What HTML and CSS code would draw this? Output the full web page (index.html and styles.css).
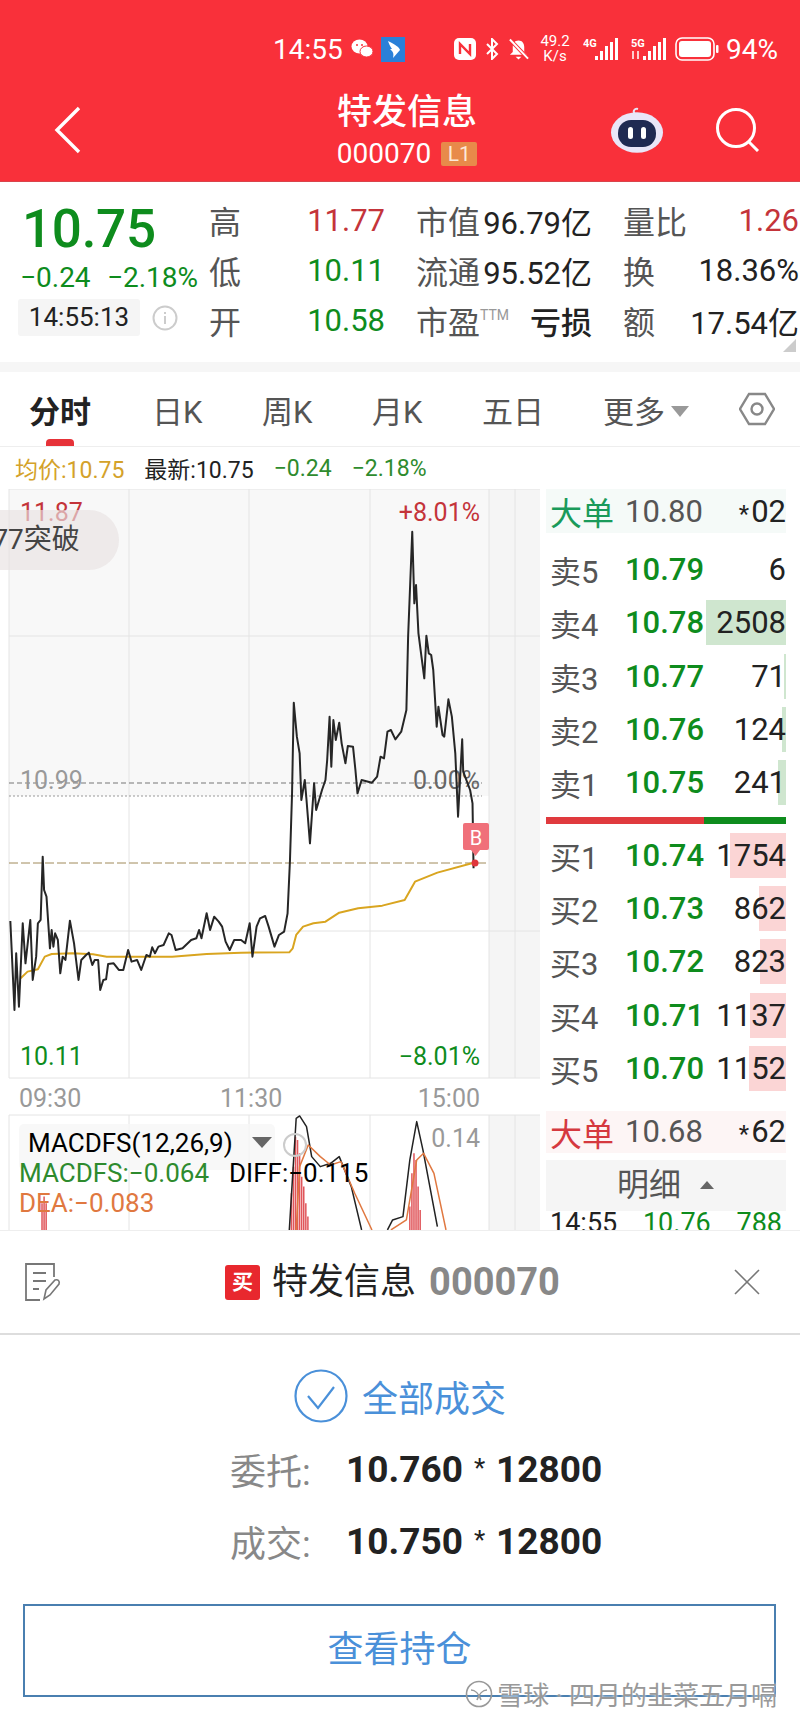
FILE: index.html
```html
<!DOCTYPE html>
<html lang="zh">
<head>
    <meta charset="UTF-8">
    <meta name="viewport" content="width=device-width, initial-scale=1.0">
    <title>特发信息</title>
    <link rel="stylesheet" href="styles.css">
</head>
<body>
<div id="app">
    <header class="top">
        <div class="status">
            <span class="clock">14:55</span>
            <svg class="ico-wx" viewBox="0 0 22 20"><ellipse cx="8.5" cy="7.5" rx="8" ry="7" fill="#fff"/><ellipse cx="15.5" cy="12.5" rx="6.5" ry="5.5" fill="#fff" stroke="#f9303a"/><circle cx="6" cy="6" r="1" fill="#f9303a"/><circle cx="11" cy="6" r="1" fill="#f9303a"/></svg>
            <svg class="ico-app" viewBox="0 0 24 25"><rect width="24" height="25" fill="#2a80d8"/><path d="M7 4 C14 7 19 11 19 13 L12 21 C13 16 12 15 9 12 L11 12 C9 9 8 7 7 4Z" fill="#fff"/></svg>
            <svg class="ico-nfc" viewBox="0 0 22 22"><rect width="22" height="22" rx="5" fill="#fff"/><path d="M6 16V6l10 10V6" fill="none" stroke="#f9303a" stroke-width="2.4"/></svg>
            <svg class="ico-bt" viewBox="0 0 16 22"><path d="M3 6l10 10-5 5V1l5 5L3 16" fill="none" stroke="#fff" stroke-width="2"/></svg>
            <svg class="ico-bell" viewBox="0 0 22 23"><path d="M11 2c4 0 6 3 6 7v5l3 3H2l3-3V9c0-4 2-7 6-7z" fill="#fff"/><path d="M8 19h6l-3 3z" fill="#fff"/><path d="M2 1l19 20" stroke="#f9303a" stroke-width="4"/><path d="M2 1l19 20" stroke="#fff" stroke-width="2"/></svg>
            <span class="speed"><span>49.2</span><span>K/s</span></span>
            <svg class="ico-sig" viewBox="0 0 36 24"><text x="0" y="10" class="sig-txt">4G</text><rect x="12" y="19" width="3" height="4" fill="#fff"/><rect x="17" y="14" width="3" height="9" fill="#fff"/><rect x="22" y="9" width="3" height="14" fill="#fff"/><rect x="27" y="5" width="3" height="18" fill="#fff"/><rect x="32" y="1" width="3" height="22" fill="#fff"/></svg>
            <svg class="ico-sig" viewBox="0 0 36 24"><text x="0" y="10" class="sig-txt">5G</text><path d="M2 14v8M7 14v8" stroke="#fff" stroke-width="1.5"/><rect x="12" y="19" width="3" height="4" fill="#fff"/><rect x="17" y="14" width="3" height="9" fill="#fff"/><rect x="22" y="9" width="3" height="14" fill="#fff"/><rect x="27" y="5" width="3" height="18" fill="#fff"/><rect x="32" y="1" width="3" height="22" fill="#fff"/></svg>
            <svg class="ico-bat" viewBox="0 0 44 24"><rect x="1" y="1" width="38" height="22" rx="6" fill="none" stroke="#fff" stroke-width="1.6"/><rect x="4" y="4" width="32" height="16" rx="3" fill="#fff"/><rect x="41" y="8" width="2.5" height="8" rx="1" fill="#fff"/></svg>
            <span class="batt">94%</span>
        </div>
        <div class="nav">
            <svg class="ico-back" viewBox="0 0 28 48"><path d="M25 2L3 24l22 22" fill="none" stroke="#fff" stroke-width="3.4"/></svg>
            <div class="title">
                <div class="name">特发信息</div>
                <div class="code">000070<span class="lv">L1</span></div>
            </div>
            <div class="nav-r">
                <svg class="ico-bot" viewBox="0 0 54 48"><path d="M25 8c-3-3 0-6 3-5" fill="none" stroke="#e8e4f4" stroke-width="2"/><circle cx="27" cy="27" r="26" fill="#e9e6f8" transform="translate(0 0) scale(1 .78) translate(0 7)"/><rect x="8" y="14" width="38" height="27" rx="13" fill="#1f2a52"/><rect x="18" y="21" width="5" height="12" rx="2.5" fill="#fff"/><rect x="31" y="21" width="5" height="12" rx="2.5" fill="#fff"/></svg>
                <svg class="ico-search" viewBox="0 0 44 44"><circle cx="20" cy="20" r="18.5" fill="none" stroke="#fff" stroke-width="3"/><path d="M32 33l10 10" stroke="#fff" stroke-width="3"/></svg>
            </div>
        </div>
    </header>

    <section class="quote">
        <div class="now">
            <div class="price">10.75</div>
            <div class="chg"><span>−0.24</span><span>−2.18%</span></div>
            <div class="when">
                <span class="chip">14:55:13</span>
                <svg class="ico-info" viewBox="0 0 26 26"><circle cx="13" cy="13" r="11.5" fill="none" stroke="#ccc" stroke-width="2"/><path d="M13 11v8M13 7v2" stroke="#ccc" stroke-width="2"/></svg>
            </div>
        </div>
        <div class="stats">
            <div class="stat"><span class="k">高</span><span class="red">11.77</span></div>
            <div class="stat"><span class="k">市值</span><span>96.79亿</span></div>
            <div class="stat"><span class="k">量比</span><span class="red">1.26</span></div>
            <div class="stat"><span class="k">低</span><span class="green">10.11</span></div>
            <div class="stat"><span class="k">流通</span><span>95.52亿</span></div>
            <div class="stat"><span class="k">换</span><span>18.36%</span></div>
            <div class="stat"><span class="k">开</span><span class="green">10.58</span></div>
            <div class="stat"><span class="k">市盈<sup class="ttm">TTM</sup></span><span class="loss">亏损</span></div>
            <div class="stat"><span class="k">额</span><span>17.54亿</span></div>
        </div>
        <i class="corner"></i>
    </section>

    <nav class="tabs">
        <a class="active">分时</a>
        <a>日K</a>
        <a>周K</a>
        <a>月K</a>
        <a>五日</a>
        <a class="more">更多<i></i></a>
        <svg class="ico-hex" viewBox="0 0 36 36"><path d="M10 3h16l9 15-9 15H10L1 18z" fill="none" stroke="#888" stroke-width="2.4" transform="translate(0 0)"/><circle cx="18" cy="18" r="5.5" fill="none" stroke="#888" stroke-width="2.4"/></svg>
    </nav>

    <div class="info">
        <span class="avg">均价:10.75</span>
        <span>最新:10.75</span>
        <span class="dgreen">−0.24</span>
        <span class="dgreen">−2.18%</span>
    </div>

    <main class="main">
        <div class="chart">
            <svg class="plot" viewBox="0 489 542 741">
                <!-- 背景 -->
                <rect x="9" y="489" width="480" height="307" fill="#f8f8f8"/>
                <rect x="489" y="489" width="51" height="589" fill="#f5f5f5"/>
                <rect x="489" y="1115" width="51" height="115" fill="#f5f5f5"/>
                <!-- 网格 -->
                <g class="grid">
                    <path d="M9 489H540M9 636H540M9 931H540M9 1078H540M9 1115H540"/>
                    <path d="M9 489V1078M129 489V1078M249 489V1078M370 489V1078M489 489V1078M515 489V1078"/>
                    <path d="M9 1115V1230M129 1115V1230M249 1115V1230M370 1115V1230M489 1115V1230M515 1115V1230"/>
                </g>
                <path class="dash" d="M9 783H482"/>
                <path class="dot" d="M9 796H482"/>
                <path class="dash-gold" d="M9 863H489"/>

                <text x="20" y="521" class="t red">11.87</text>
                <text x="480" y="521" class="t red end">+8.01%</text>
                <text x="20" y="789" class="t gray">10.99</text>
                <text x="480" y="789" class="t dim end">0.00%</text>
                <text x="20" y="1065" class="t green">10.11</text>
                <text x="480" y="1065" class="t green end">−8.01%</text>
                <text x="19" y="1107" class="t gray">09:30</text>
                <text x="220" y="1107" class="t gray">11:30</text>
                <text x="480" y="1107" class="t gray end">15:00</text>

                <!-- 分时 -->
                <g transform="translate(0 760) scale(.3444 .3333)">
                    <polyline class="avg-line" points="60,655 80,635 110,628 130,590 150,582 210,580 270,583 310,590 400,590 500,590 600,582 700,578 840,577 850,565 860,525 880,500 910,490 945,485 985,458 1040,445 1110,437 1175,420 1205,365 1270,338 1370,310"/>
                    <polyline class="price-line" points="30,483 42,750 47,580 55,740 66,490 74,610 88,480 95,660 105,590 110,490 118,480 124,290 128,390 135,410 145,565 150,510 155,560 160,520 168,540 175,640 182,590 190,600 203,482 215,550 228,660 236,600 250,585 258,578 268,615 275,600 285,600 291,690 300,660 308,658 314,612 330,610 345,630 358,630 372,570 382,605 398,600 410,630 425,585 435,590 442,562 450,580 460,560 475,555 490,520 498,525 510,570 530,565 555,540 570,535 578,510 585,535 600,460 610,510 622,470 635,485 645,500 655,545 667,570 680,540 700,540 712,550 725,490 733,590 745,500 755,475 770,468 780,500 797,560 810,525 825,515 835,460 842,300 848,100 853,-172 862,-70 870,-20 875,120 885,60 890,120 900,250 912,70 918,150 935,90 945,60 950,0 957,-130 962,20 968,-120 975,-60 985,-112 992,-50 1003,10 1010,-42 1025,-40 1032,30 1038,100 1050,60 1080,68 1095,50 1105,-10 1115,-5 1125,-85 1135,-90 1148,-62 1165,-85 1180,-150 1185,-370 1197,-685 1203,-470 1208,-525 1215,-380 1232,-245 1238,-373 1245,-320 1252,-315 1258,-270 1268,-100 1273,-160 1285,-75 1290,-70 1302,-182 1312,-130 1322,-20 1330,170 1342,-62 1345,35 1365,90 1372,130 1375,325"/>
                    <!-- MACD -->
                    <path class="macd-bar" d="M846 1410V1300M852 1410V1220M858 1410V1130M864 1410V1140M870 1410V1180M876 1410V1250M882 1410V1280M888 1410V1330M894 1410V1370M1190 1410V1340M1196 1410V1240M1202 1410V1180M1208 1410V1200M1214 1410V1280M1220 1410V1350M122 1410V1330M128 1410V1310M134 1410V1330"/>
                    <polyline class="macd-b" points="840,1410 860,1075 870,1068 890,1100 905,1190 930,1220 960,1210 985,1190 1020,1280 1050,1410"/>
                    <polyline class="macd-o" points="860,1410 870,1220 895,1155 930,1190 960,1215 990,1205 1030,1300 1080,1410"/>
                    <polyline class="macd-b" points="1125,1410 1140,1380 1170,1370 1190,1200 1210,1085 1228,1170 1270,1400"/>
                    <polyline class="macd-o" points="1135,1410 1180,1380 1210,1200 1230,1180 1260,1240 1295,1410"/>
                </g>

                <!-- B点 -->
                <rect x="463" y="823" width="26" height="27" rx="2" fill="#f0707a"/>
                <path d="M471 850h9l-4.500 6z" fill="#f0707a"/>
                <text x="476" y="845" class="t-b">B</text>
                <circle cx="475" cy="863" r="3.500" fill="#e0353c"/>

                <!-- 指标 -->
                <rect x="19" y="1124" width="256" height="46" rx="5" fill="#f6f6f6" opacity=".8"/>
                <text x="28" y="1152" class="t-m">MACDFS(12,26,9)</text>
                <path d="M252 1137h20l-10 11z" fill="#666"/>
                <circle cx="295" cy="1145" r="11" fill="none" stroke="#ccc" stroke-width="2"/>
                <text x="480" y="1147" class="t gray end">0.14</text>
                <text x="19" y="1182" class="t-m dgreen">MACDFS:−0.064</text>
                <text x="229" y="1182" class="t-m">DIFF:−0.115</text>
                <text x="19" y="1212" class="t-m orange">DEA:−0.083</text>
            </svg>
            <div class="pill"><span>.77突破</span></div>
        </div>

        <aside class="book">
            <div class="big big-up"><span class="lab">大单</span><span class="p">10.80</span><span class="v"><em>*</em>02</span></div>
            <div class="levels">
                <div class="lv-row"><span class="lab">卖5</span><span class="p">10.79</span><span class="v">6</span></div>
                <div class="lv-row"><span class="lab">卖4</span><span class="p">10.78</span><span class="v"><i class="bar ask" style="width:80px"></i>2508</span></div>
                <div class="lv-row"><span class="lab">卖3</span><span class="p">10.77</span><span class="v"><i class="bar ask" style="width:2px"></i>71</span></div>
                <div class="lv-row"><span class="lab">卖2</span><span class="p">10.76</span><span class="v"><i class="bar ask" style="width:4px"></i>124</span></div>
                <div class="lv-row"><span class="lab">卖1</span><span class="p">10.75</span><span class="v"><i class="bar ask" style="width:8px"></i>241</span></div>
            </div>
            <div class="ratio"><i class="r-buy"></i><i class="r-sell"></i></div>
            <div class="levels">
                <div class="lv-row"><span class="lab">买1</span><span class="p">10.74</span><span class="v"><i class="bar bid" style="width:56px"></i>1754</span></div>
                <div class="lv-row"><span class="lab">买2</span><span class="p">10.73</span><span class="v"><i class="bar bid" style="width:27px"></i>862</span></div>
                <div class="lv-row"><span class="lab">买3</span><span class="p">10.72</span><span class="v"><i class="bar bid" style="width:26px"></i>823</span></div>
                <div class="lv-row"><span class="lab">买4</span><span class="p">10.71</span><span class="v"><i class="bar bid" style="width:36px"></i>1137</span></div>
                <div class="lv-row"><span class="lab">买5</span><span class="p">10.70</span><span class="v"><i class="bar bid" style="width:37px"></i>1152</span></div>
            </div>
            <div class="big big-down"><span class="lab">大单</span><span class="p">10.68</span><span class="v"><em>*</em>62</span></div>
            <div class="detail">明细<i></i></div>
            <div class="tick"><span>14:55</span><span class="green">10.76</span><span class="green">788</span></div>
        </aside>
    </main>

    <section class="sheet">
        <div class="sheet-head">
            <svg class="ico-note" viewBox="0 0 36 38"><path d="M29 14V1H1v36h14" fill="none" stroke="#777" stroke-width="1.800"/><path d="M8 10h13M8 18h13M8 26h6" stroke="#777" stroke-width="1.800"/><path d="M19 36l2-9 9-10c3-1 5 1 4 4l-9 11z" fill="none" stroke="#777" stroke-width="1.600"/></svg>
            <div class="sheet-title">
                <span class="buy">买</span>
                <span class="s-name">特发信息</span>
                <span class="s-code">000070</span>
            </div>
            <svg class="ico-close" viewBox="0 0 26 26"><path d="M1 1l24 24M25 1L1 25" stroke="#777" stroke-width="1.600"/></svg>
        </div>
        <div class="result">
            <svg class="ico-ok" viewBox="0 0 54 54"><circle cx="27" cy="27" r="25.500" fill="none" stroke="#4a90d9" stroke-width="2.200"/><path d="M14 27l10 12 16-21" fill="none" stroke="#4a90d9" stroke-width="2.200"/></svg>
            <span>全部成交</span>
        </div>
        <div class="deal"><span class="d-k">委托:</span><span class="d-v">10.760<em>*</em>12800</span></div>
        <div class="deal"><span class="d-k">成交:</span><span class="d-v">10.750<em>*</em>12800</span></div>
        <a class="hold">查看持仓</a>
        <div class="mark">
            <svg viewBox="0 0 28 28"><circle cx="14" cy="14" r="12.500" fill="none" stroke="#999" stroke-width="1.600"/><path d="M6 10c4 0 8 4 10 10M22 10c-4 0-8 4-10 10" fill="none" stroke="#999" stroke-width="1.600"/></svg>
            <span>雪球 · 四月的韭菜五月嗝</span>
        </div>
    </section>
</div>
</body>
</html>
```
FILE: styles.css
```css
html, body {
    margin: 0;
    padding: 0;
}
body {
    font-family: Roboto, "Noto Sans CJK SC", sans-serif;
    color: #222;
    background: #fff;
}
#app {
    width: 800px;
    height: 1722px;
    overflow: hidden;
    position: relative;
}
svg {
    display: block;
    flex: none;
}
.red { color: #c4343a; fill: #c4343a; }
.green { color: #0e8c1d; fill: #0e8c1d; }
.dgreen { color: #2e8b2e; fill: #2e8b2e; }
.gray { fill: #999; }
.dim { fill: #666; }
.orange { fill: #e07840; }

/* 顶部 */
.top {
    height: 182px;
    background: #f9303a;
    color: #fff;
    border-bottom: 1px solid #d9444c;
    box-sizing: border-box;
}
.status {
    height: 78px;
    padding: 20px 0 0 273px;
    box-sizing: border-box;
    display: flex;
    align-items: center;
    font-size: 28px;
}
.clock { width: 78px; }
.ico-wx { width: 22px; height: 20px; }
.ico-app { width: 24px; height: 25px; margin-left: 8px; }
.ico-nfc { width: 22px; height: 22px; margin-left: 49px; }
.ico-bt { width: 16px; height: 22px; margin-left: 8px; }
.ico-bell { width: 21px; height: 23px; margin-left: 8px; }
.speed {
    width: 32px;
    margin-left: 10px;
    display: flex;
    flex-direction: column;
    align-items: center;
    font-size: 15px;
    line-height: 15px;
}
.ico-sig { width: 36px; height: 24px; margin-left: 12px; }
.sig-txt { font-size: 11px; fill: #fff; font-weight: 700; }
.ico-bat { width: 44px; height: 24px; margin-left: 8px; }
.batt { margin-left: 7px; font-size: 28px; }

.nav {
    height: 103px;
    display: grid;
    grid-template-columns: 1fr auto 1fr;
    align-items: center;
    padding: 0 40px 0 54px;
}
.ico-back { width: 28px; height: 48px; }
.title { text-align: center; width: 141px; }
.name {
    font-size: 35px;
    line-height: 46px;
    font-weight: 500;
    margin-top: 2px;
}
.code {
    font-size: 28px;
    line-height: 36px;
    display: flex;
    align-items: center;
    justify-content: center;
    white-space: nowrap;
    gap: 10px;
}
.lv {
    width: 36px;
    height: 24px;
    line-height: 24px;
    font-size: 21px;
    text-align: center;
    background: #e88a4a;
    color: #fde8d8;
    border-radius: 2px;
}
.nav-r {
    display: flex;
    justify-content: flex-end;
    align-items: center;
    gap: 52px;
}
.ico-bot { width: 54px; height: 48px; }
.ico-search { width: 44px; height: 44px; }

/* 行情 */
.quote {
    height: 180px;
    position: relative;
    display: flex;
    padding-left: 20px;
    box-sizing: border-box;
}
.now {
    width: 189px;
    flex: none;
    padding-top: 20px;
}
.price {
    font-size: 53px;
    line-height: 54px;
    font-weight: 500;
    color: #0e8c1d;
    letter-spacing: -.3px;
    margin-left: 2px;
}
.chg {
    width: 178px;
    display: flex;
    justify-content: space-between;
    font-size: 28px;
    line-height: 34px;
    color: #0e8c1d;
    margin-top: 5px;
}
.when {
    display: flex;
    align-items: center;
    margin: 4px 0 0 -2px;
}
.chip {
    width: 122px;
    height: 37px;
    line-height: 37px;
    background: #f5f5f5;
    border-radius: 3px;
    text-align: center;
    font-size: 26px;
}
.ico-info { width: 26px; height: 26px; margin-left: 12px; }
.stats {
    display: grid;
    grid-template-columns: repeat(3, 176px);
    grid-auto-rows: 50px;
    column-gap: 31px;
    padding-top: 13px;
}
.stat {
    display: flex;
    justify-content: space-between;
    align-items: center;
    font-size: 31px;
    white-space: nowrap;
}
.k {
    color: #555;
    font-size: 32px;
}
.ttm {
    font-size: 14px;
    color: #999;
    vertical-align: 14px;
    line-height: 0;
}
.loss { font-size: 31px; font-weight: 500; }
.corner {
    position: absolute;
    right: 4px;
    bottom: 10px;
    border-left: 13px solid transparent;
    border-bottom: 13px solid #ccc;
}

/* 切换 */
.tabs {
    height: 85px;
    border-top: 10px solid #f6f6f6;
    border-bottom: 1px solid #eee;
    box-sizing: border-box;
    display: flex;
    align-items: center;
    padding-left: 29px;
    position: relative;
    font-size: 31px;
    color: #555;
}
.tabs a { width: 110px; flex: none; white-space: nowrap; }
.tabs .active {
    color: #222;
    font-weight: 700;
    width: 123px;
}
.tabs .active::after {
    content: "";
    position: absolute;
    left: 46px;
    bottom: 0;
    width: 28px;
    height: 7px;
    border-radius: 4px 4px 0 0;
    background: #e63238;
}
.tabs .more { width: 136px; display: flex; align-items: center; margin-left: 11px; }
.tabs .more i {
    margin: 4px 0 0 6px;
    border: 9px solid transparent;
    border-top: 11px solid #999;
    border-bottom: 0;
}
.ico-hex { width: 36px; height: 36px; }
.info {
    height: 42px;
    display: flex;
    align-items: center;
    padding-left: 15px;
    gap: 20px;
    font-size: 23px;
}
.avg { color: #d4a22a; }

/* 图表 */
.main {
    height: 741px;
    display: flex;
    overflow: hidden;
}
.chart {
    width: 542px;
    height: 741px;
    flex: none;
    position: relative;
    overflow: hidden;
}
.plot { width: 542px; height: 741px; }
.grid { fill: none; stroke: #e4e4e4; stroke-width: 1; }
.dash { stroke: #777; stroke-dasharray: 5 3; stroke-width: 1; }
.dot { stroke: #999; stroke-dasharray: 2 2; stroke-width: 1; }
.dash-gold { stroke: #a08a5a; stroke-dasharray: 9 3; stroke-width: 1; }
.t { font-size: 25px; }
.end { text-anchor: end; }
.t-b { font-size: 20px; fill: #fff; text-anchor: middle; }
.t-m { font-size: 26px; }
.price-line, .avg-line, .macd-b, .macd-o, .macd-bar {
    fill: none;
    vector-effect: non-scaling-stroke;
}
.price-line, .avg-line, .macd-b, .macd-o { stroke-linejoin: round; }
.price-line { stroke: #262626; stroke-width: 2; }
.avg-line { stroke: #d9a520; stroke-width: 2; }
.macd-b { stroke: #222; stroke-width: 1.500; }
.macd-o { stroke: #e07840; stroke-width: 1.500; }
.macd-bar { stroke: #e0555a; stroke-width: 1.500; }
.pill {
    position: absolute;
    left: 0;
    top: 21px;
    width: 119px;
    height: 60px;
    border-radius: 0 30px 30px 0;
    background: rgba(232, 226, 226, .65);
    font-size: 28px;
    line-height: 60px;
    color: #444;
    overflow: hidden;
    white-space: nowrap;
}
.pill span {
    display: block;
    margin-left: -15px;
}

/* 盘口 */
.book {
    width: 240px;
    margin-left: 4px;
    flex: none;
    font-size: 31px;
}
.big {
    height: 44px;
    display: flex;
    align-items: center;
    padding-left: 4px;
    white-space: nowrap;
}
.big-up { background: #f5faf8; }
.big-up .lab { color: #1a9a5a; }
.big-down {
    margin-top: 16px;
    height: 42px;
    background: #fdf5f5;
}
.big-down .lab { color: #d5393f; }
.big .lab { width: 75px; font-size: 32px; flex: none; }
.big .p { color: #555; width: 80px; flex: none; }
.v {
    flex: 1;
    text-align: right;
    position: relative;
    color: #222;
}
.v em { font-style: normal; font-size: 24px; margin-right: 2px; }
.levels { padding-top: 10px; }
.levels + .ratio + .levels { padding-top: 4px; }
.lv-row {
    height: 53.300px;
    display: flex;
    align-items: center;
    padding-left: 4px;
    color: #555;
    white-space: nowrap;
}
.lv-row .lab { width: 75px; flex: none; }
.lv-row .p { width: 80px; flex: none; color: #0e8c1d; font-weight: 500; }
.bar {
    position: absolute;
    right: 0;
    top: -4px;
    bottom: -4px;
    z-index: -1;
}
.bar.ask { background: #cfe6cf; }
.bar.bid { background: #fbd5d5; }
.ratio {
    display: flex;
    height: 7px;
    margin-top: 8px;
}
.r-buy { width: 158px; background: #e03a3e; }
.r-sell { width: 82px; background: #0e8c1d; }
.detail {
    margin-top: 7px;
    height: 51px;
    background: #f5f5f5;
    font-size: 32px;
    line-height: 51px;
    color: #555;
    display: flex;
    align-items: center;
    padding-left: 71px;
}
.detail i {
    margin-left: 19px;
    border: 7px solid transparent;
    border-bottom: 8px solid #666;
    border-top: 0;
}
.tick {
    display: flex;
    justify-content: space-between;
    font-size: 27px;
    line-height: 24px;
    padding: 0 4px;
}

/* 弹层 */
.sheet {
    height: 492px;
    background: #fff;
    position: relative;
    border-top: 1px solid #eee;
    box-sizing: border-box;
}
.sheet-head {
    height: 104px;
    border-bottom: 2px solid #ddd;
    box-sizing: border-box;
    display: grid;
    grid-template-columns: 1fr auto 1fr;
    align-items: center;
    padding: 0 40px 0 25px;
}
.ico-note { width: 36px; height: 38px; }
.ico-close { width: 26px; height: 26px; justify-self: end; }
.sheet-title {
    display: flex;
    align-items: center;
    white-space: nowrap;
}
.buy {
    width: 35px;
    height: 35px;
    line-height: 35px;
    background: #e8282e;
    color: #fff;
    font-size: 21px;
    font-weight: 700;
    text-align: center;
    border-radius: 3px;
    margin-right: 12px;
}
.s-name { font-size: 36px; line-height: 50px; }
.s-code {
    font-size: 38px;
    font-weight: 700;
    color: #888;
    margin-left: 13px;
}
.result {
    margin-top: 34px;
    height: 53px;
    display: flex;
    align-items: center;
    justify-content: center;
    gap: 14px;
    font-size: 36px;
    color: #4a90d9;
}
.ico-ok { width: 54px; height: 54px; }
.deal {
    display: flex;
    align-items: center;
    height: 50px;
    margin-top: 22px;
    padding-left: 230px;
    white-space: nowrap;
}
.d-k {
    width: 116px;
    font-size: 36px;
    color: #888;
}
.d-v {
    font-size: 37px;
    font-weight: 700;
    color: #222;
}
.d-v em {
    font-style: normal;
    font-weight: 400;
    font-size: 26px;
    margin: 0 11px;
    vertical-align: 5px;
}
.hold {
    display: block;
    margin: 38px 24px 0 23px;
    height: 93px;
    line-height: 89px;
    border: 2px solid #4a7fb0;
    box-sizing: border-box;
    text-align: center;
    font-size: 36px;
    color: #4a90d9;
}
.mark {
    position: absolute;
    right: 23px;
    bottom: 10px;
    display: flex;
    align-items: center;
    gap: 4px;
    font-size: 26px;
    color: #999;
    white-space: nowrap;
    text-shadow: 0 0 3px #fff;
}
.mark svg { width: 28px; height: 28px; }
```
